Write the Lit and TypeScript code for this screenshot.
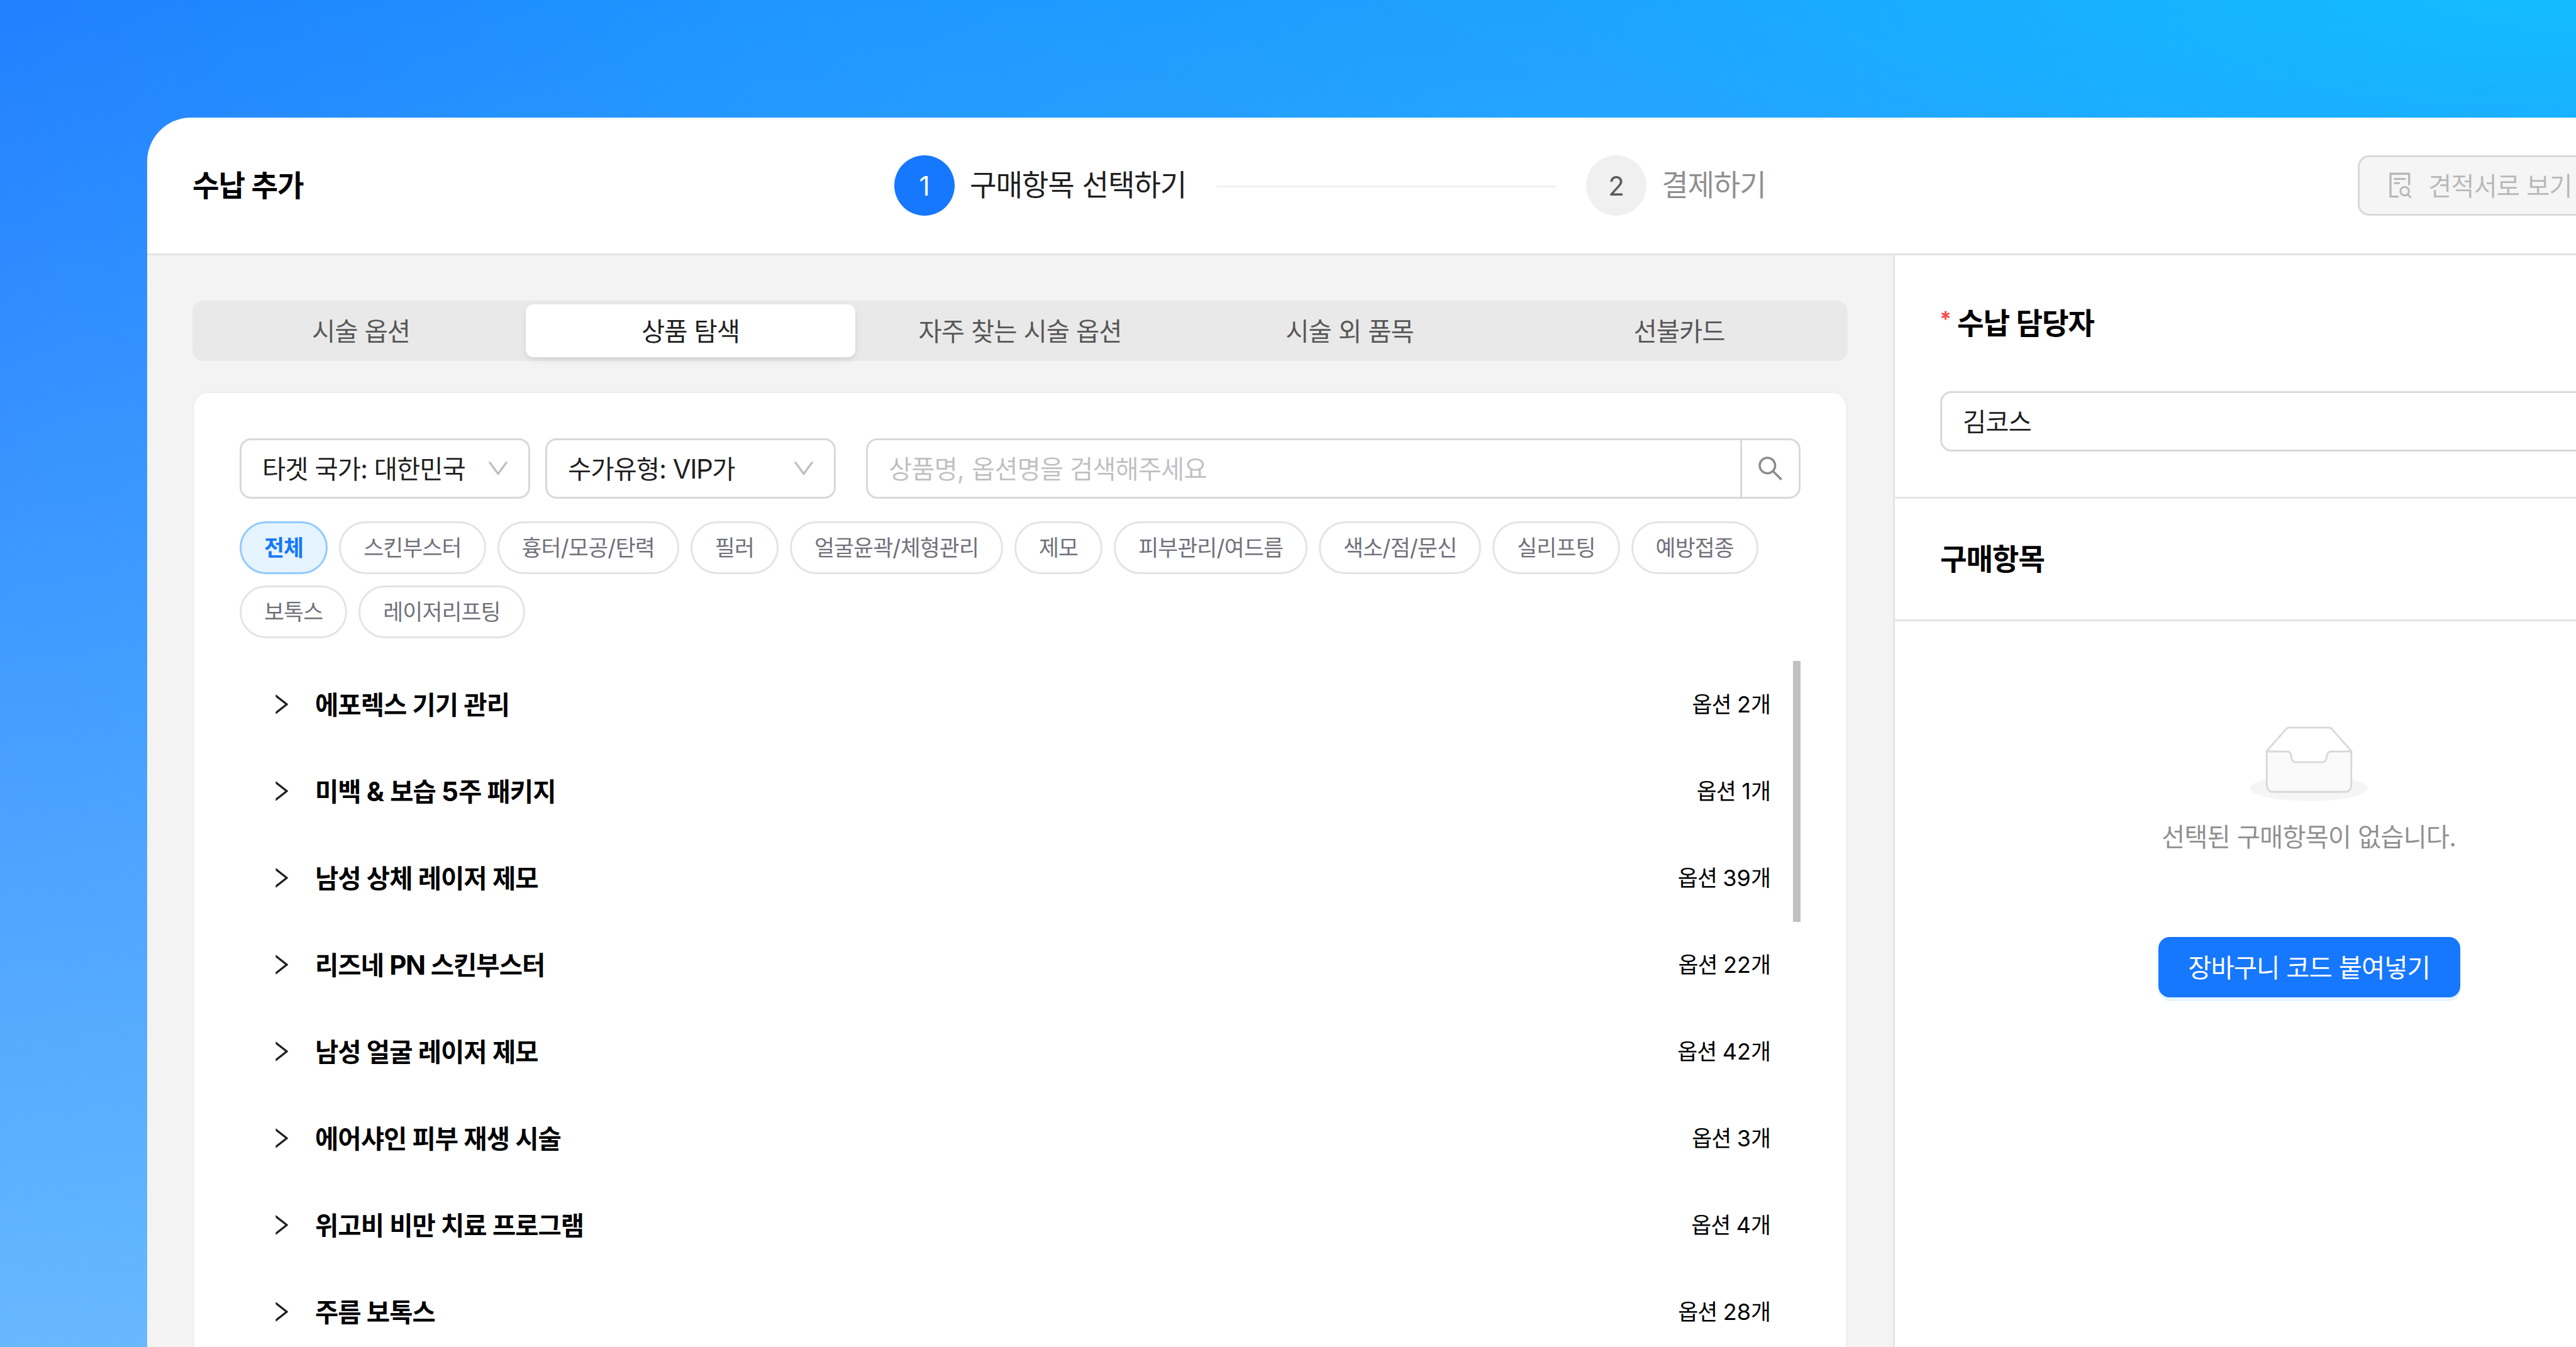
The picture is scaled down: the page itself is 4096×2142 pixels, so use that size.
import { LitElement, html, css, svg } from "lit";
import { customElement, property } from "lit/decorators.js";
import { classMap } from "lit/directives/class-map.js";

const RUNS = /([\uAC00-\uD7A3]+|[A-Z:]+)/;
const HANGUL = /^[\uAC00-\uD7A3]/;
const CAPS = /^[A-Z:]/;

/** Hangul and capital runs get their own metrics; digits and spaces stay in the base face. */
const t = (text: string) =>
  text.split(RUNS).map((part) =>
    HANGUL.test(part)
      ? html`<span class="ko">${part}</span>`
      : CAPS.test(part)
        ? html`<span class="caps">${part}</span>`
        : part
  );

const ICONS: Record<string, string> = {
  down: "M884 256h-75c-5.1 0-9.9 2.5-12.9 6.6L512 654.2 227.9 262.6c-3-4.1-7.8-6.6-12.9-6.6h-75c-6.5 0-10.3 7.4-6.5 12.7l352.6 486.1c12.8 17.6 39 17.6 51.7 0l352.6-486.1c3.9-5.3.1-12.7-6.4-12.7z",
  right: "M765.7 486.8L314.9 134.7A7.97 7.97 0 00302 141v77.3c0 4.9 2.3 9.6 6.1 12.6l360 281.1-360 281.1c-3.9 3-6.1 7.7-6.1 12.6V883c0 6.7 7.7 10.4 12.9 6.3l450.8-352.1a31.96 31.96 0 000-50.4z",
  search: "M909.6 854.5L649.9 594.8C690.2 542.7 712 479 712 412c0-80.2-31.3-155.4-87.9-212.1-56.6-56.7-132-87.9-212.1-87.9s-155.5 31.3-212.1 87.9C143.2 256.5 112 331.8 112 412c0 80.1 31.3 155.5 87.9 212.1C256.5 680.8 331.8 712 412 712c67 0 130.6-21.8 182.7-62l259.7 259.6a8.2 8.2 0 0011.6 0l43.6-43.5a8.2 8.2 0 000-11.6zM570.4 570.4C528 612.7 471.8 636 412 636s-116-23.3-158.4-65.6C211.3 528 188 471.8 188 412s23.3-116.1 65.6-158.4C296 211.3 352.2 188 412 188s116.1 23.2 158.4 65.6S636 352.2 636 412s-23.3 116.1-65.6 158.4z",
  fileSearch: "M688 312v-48c0-4.4-3.6-8-8-8H296c-4.4 0-8 3.6-8 8v48c0 4.4 3.6 8 8 8h384c4.4 0 8-3.6 8-8zm-392 88c-4.4 0-8 3.6-8 8v48c0 4.4 3.6 8 8 8h184c4.4 0 8-3.6 8-8v-48c0-4.4-3.6-8-8-8H296zm144 452H208V148h560v344c0 4.4 3.6 8 8 8h56c4.4 0 8-3.6 8-8V108c0-17.7-14.3-32-32-32H168c-17.7 0-32 14.3-32 32v784c0 17.7 14.3 32 32 32h272c4.4 0 8-3.6 8-8v-56c0-4.4-3.6-8-8-8zm445.7 51.5l-93.3-93.3C814.7 780.7 828 743.9 828 704c0-97.2-78.8-176-176-176s-176 78.8-176 176 78.8 176 176 176c35.8 0 69-10.7 96.8-29l94.7 94.7c1.6 1.6 3.6 2.3 5.6 2.3s4.1-.8 5.6-2.3l31-31a7.9 7.9 0 000-11.2zM652 816c-61.9 0-112-50.1-112-112s50.1-112 112-112 112 50.1 112 112-50.1 112-112 112z",
};

const icon = (name: string, cls: string) =>
  html`<svg class=${cls} viewBox="0 0 1024 1024" fill="currentColor">${svg`<path d=${ICONS[name]}></path>`}</svg>`;

const text = css`
  * { box-sizing: border-box; }
  .ko {
    font-family: "Noto Sans CJK KR", sans-serif;
    font-size: 0.965em;
    letter-spacing: -0.0254em;
    line-height: 0;
  }
  .caps { letter-spacing: -0.035em; }
`;

@customElement("step-bar")
class StepBar extends LitElement {
  static styles = [text, css`
    :host { display: flex; align-items: center; }
    .dot { width: 96px; height: 96px; border-radius: 50%; display: flex; align-items: center; justify-content: center; font-size: 42px; margin-right: 24px; background: #f0f0f0; color: rgba(0,0,0,.65); }
    .dot.on { background: #1677ff; color: #fff; }
    .label { font-size: 48px; line-height: 94px; height: 96px; white-space: nowrap; color: rgba(0,0,0,.45); }
    .label.on { width: 344px; color: rgba(0,0,0,.88); }
    .line { width: 540px; height: 3px; background: #f0f0f0; margin: 3px 48px 0; }
  `];
  render() {
    return html`
      <div class="dot on">1</div><div class="label on">${t("구매항목 선택하기")}</div>
      <div class="line"></div>
      <div class="dot">2</div><div class="label">${t("결제하기")}</div>`;
  }
}

@customElement("tab-bar")
class TabBar extends LitElement {
  static styles = [text, css`
    :host { display: flex; height: 96px; padding: 6px; border-radius: 18px; background: #e9e9e9; }
    .tab { flex: 1; display: flex; align-items: center; justify-content: center; font-size: 42px; white-space: pre; color: rgba(0,0,0,.65); border-radius: 12px; }
    .tab.on { background: #fff; color: rgba(0,0,0,.88); box-shadow: 0 3px 6px 0 rgba(0,0,0,.03), 0 3px 18px -3px rgba(0,0,0,.05), 0 6px 12px 0 rgba(0,0,0,.04); }
  `];
  tabs = ["시술 옵션", "상품 탐색", "자주 찾는 시술 옵션", "시술 외 품목", "선불카드"];
  render() {
    return this.tabs.map((name, i) => html`<div class=${classMap({ tab: true, on: i === 1 })}><span>${t(name)}</span></div>`);
  }
}

@customElement("filter-select")
class FilterSelect extends LitElement {
  @property() label = "";
  static styles = [text, css`
    :host { display: flex; align-items: center; justify-content: space-between; width: 462px; height: 96px; border: 3px solid #d9d9d9; border-radius: 18px; padding: 0 27px 0 33px; font-size: 42px; background: #fff; color: rgba(0,0,0,.88); }
    .label { white-space: nowrap; }
    .chevron { width: 42px; height: 42px; color: rgba(0,0,0,.25); }
  `];
  render() {
    return html`<span class="label">${t(this.label)}</span>${icon("down", "chevron")}`;
  }
}

@customElement("product-list")
class ProductList extends LitElement {
  static styles = [text, css`
    :host { display: block; position: relative; margin-top: 36px; padding-right: 12px; }
    .row { display: flex; align-items: center; height: 138px; padding: 0 36px 0 45px; color: #000; }
    .arrow { width: 42px; height: 42px; margin-right: 33px; color: rgba(0,0,0,.88); }
    .name { flex: 1; font-size: 42px; font-weight: 700; }
    .name .ko { letter-spacing: -0.0235em; }
    .count { font-size: 36px; }
    .thumb { position: absolute; right: 0; top: 0; width: 12px; height: 415px; background: #c1c1c1; }
  `];
  rows: [string, number][] = [
    ["에포렉스 기기 관리", 2],
    ["미백 & 보습 5주 패키지", 1],
    ["남성 상체 레이저 제모", 39],
    ["리즈네 PN 스킨부스터", 22],
    ["남성 얼굴 레이저 제모", 42],
    ["에어샤인 피부 재생 시술", 3],
    ["위고비 비만 치료 프로그램", 4],
    ["주름 보톡스", 28],
  ];
  render() {
    return html`${this.rows.map(([name, n]) => html`
      <div class="row">
        ${icon("right", "arrow")}
        <span class="name">${t(name)}</span>
        <span class="count">${t(`옵션 ${n}개`)}</span>
      </div>`)}
      <div class="thumb"></div>`;
  }
}

@customElement("cart-panel")
class CartPanel extends LitElement {
  static styles = [text, css`
    :host { display: block; width: 1317px; flex: none; background: #fff; }
    .owner { height: 387px; padding: 72px; border-bottom: 3px solid #e4e4e4; }
    .heading { display: flex; align-items: center; font-size: 48px; font-weight: 700; height: 70px; color: #000; }
    .star { width: 15px; height: 15px; margin: -23px 11px 0 1px; color: #ff4d4f; }
    .field { height: 96px; margin-top: 74px; border: 3px solid #d9d9d9; border-radius: 18px; padding: 0 33px; display: flex; align-items: center; font-size: 42px; color: rgba(0,0,0,.88); }
    .items { height: 195px; padding: 60px 72px; border-bottom: 3px solid #e4e4e4; }
    .empty { display: flex; flex-direction: column; align-items: center; padding-top: 166px; }
    .box { width: 187px; height: 120px; }
    .msg { margin-top: 24px; height: 66px; line-height: 66px; font-size: 42px; color: rgba(0,0,0,.45); }
    .paste { margin-top: 126px; width: 480px; height: 96px; border-radius: 18px; background: #1677ff; color: #fff; font-size: 42px; display: flex; align-items: center; justify-content: center; box-shadow: 0 6px 0 rgba(5,145,255,.1); }
  `];
  render() {
    return html`
      <div class="owner">
        <div class="heading">
          <svg class="star" viewBox="0 0 15 15" stroke="currentColor" stroke-width="3.1"><path d="M7.5 0.5v14M1.4 4l12.2 7M1.4 11l12.2-7"></path></svg>
          <span>${t("수납 담당자")}</span>
        </div>
        <div class="field"><span>${t("김코스")}</span></div>
      </div>
      <div class="items"><div class="heading"><span>${t("구매항목")}</span></div></div>
      <div class="empty">
        <svg class="box" viewBox="0 0 64 41">
          <g transform="translate(0 1)" fill="none" fill-rule="evenodd">
            <ellipse fill="#f5f5f5" cx="32" cy="33" rx="32" ry="7"></ellipse>
            <g fill-rule="nonzero" stroke="#d9d9d9">
              <path d="M55 12.76L44.854 1.258C44.367.474 43.656 0 42.907 0H21.093c-.749 0-1.46.474-1.947 1.257L9 12.761V22h46v-9.24z"></path>
              <path d="M41.613 15.931c0-1.605.994-2.93 2.227-2.931H55v18.137C55 33.26 53.68 35 52.05 35h-40.1C10.32 35 9 33.259 9 31.137V13h11.16c1.233 0 2.227 1.323 2.227 2.928v.022c0 1.605 1.005 2.901 2.237 2.901h14.752c1.232 0 2.237-1.308 2.237-2.913v-.007z" fill="#fafafa"></path>
            </g>
          </g>
        </svg>
        <div class="msg">${t("선택된 구매항목이 없습니다.")}</div>
        <div class="paste"><span>${t("장바구니 코드 붙여넣기")}</span></div>
      </div>`;
  }
}

@customElement("app-root")
class AppRoot extends LitElement {
  static styles = [text, css`
    :host {
      display: block; width: 4096px; height: 2142px; overflow: hidden;
      padding: 187px 0 0 234px; box-sizing: border-box;
      font-family: Inter, "Noto Sans CJK KR", sans-serif; word-spacing: -0.047em;
      background:
        radial-gradient(1640px 340px at 100% 0, #14bcff, rgba(20,188,255,0)),
        linear-gradient(180deg, rgba(103,184,255,0), #67b8ff),
        linear-gradient(90deg, #2080ff 0%, #1e96ff 30%, #1ea2ff 60%, #16a6ff 100%);
    }
    .window { width: 4096px; height: 1955px; border-top-left-radius: 70px; overflow: hidden; background: #fff; }
    .header { display: flex; align-items: center; height: 219px; padding-left: 72px; border-bottom: 3px solid #e4e4e4; }
    .title { width: 1116px; font-size: 48px; font-weight: 700; color: #000; padding-bottom: 2px; }
    .steps { width: 2327px; }
    .quote { display: flex; align-items: center; flex: none; width: 480px; height: 96px; border: 3px solid #d9d9d9; border-radius: 18px; background: #f5f5f5; color: rgba(0,0,0,.25); font-size: 42px; padding-left: 41px; white-space: nowrap; }
    .doc { width: 48px; height: 48px; margin-right: 20px; }
    .body { display: flex; height: 1736px; }
    .browse { width: 2779px; flex: none; padding: 72px; padding-bottom: 0; background: #f3f3f3; border-right: 3px solid #e4e4e6; overflow: hidden; }
    .card { margin-top: 48px; height: 1600px; border: 3px solid #f0f0f0; border-radius: 24px; background: #fff; padding: 72px; }
    .filters { display: flex; }
    .second { margin: 0 48px 0 24px; }
    .search { flex: 1; display: flex; height: 96px; border: 3px solid #d9d9d9; border-radius: 18px; font-size: 42px; color: rgba(0,0,0,.25); }
    .hint { flex: 1; display: flex; align-items: center; padding-left: 33px; white-space: pre; }
    .go { width: 93px; border-left: 3px solid #d9d9d9; display: flex; align-items: center; justify-content: center; color: rgba(0,0,0,.45); }
    .glass { width: 48px; height: 48px; }
    .chips { display: flex; flex-wrap: wrap; gap: 18px; margin-top: 36px; }
    .chip { height: 84px; padding: 0 36px; border: 3px solid #e4e4e7; border-radius: 42px; display: flex; align-items: center; font-size: 36px; letter-spacing: -0.016em; color: #71717a; }
    .chip.on { border-color: #91caff; background: #e6f4ff; color: #1677ff; font-weight: 700; }
  `];
  chips = ["전체", "스킨부스터", "흉터/모공/탄력", "필러", "얼굴윤곽/체형관리", "제모", "피부관리/여드름", "색소/점/문신", "실리프팅", "예방접종", "보톡스", "레이저리프팅"];
  render() {
    return html`
      <div class="window">
        <div class="header">
          <div class="title">${t("수납 추가")}</div>
          <step-bar class="steps"></step-bar>
          <div class="quote">${icon("fileSearch", "doc")}<span>${t("견적서로 보기")}</span></div>
        </div>
        <div class="body">
          <div class="browse">
            <tab-bar></tab-bar>
            <div class="card">
              <div class="filters">
                <filter-select label="타겟 국가: 대한민국"></filter-select>
                <filter-select class="second" label="수가유형: VIP가"></filter-select>
                <div class="search">
                  <div class="hint"><span>${t("상품명, 옵션명을 검색해주세요")}</span></div>
                  <div class="go">${icon("search", "glass")}</div>
                </div>
              </div>
              <div class="chips">
                ${this.chips.map((c, i) => html`<div class=${classMap({ chip: true, on: i === 0 })}><span>${t(c)}</span></div>`)}
              </div>
              <product-list></product-list>
            </div>
          </div>
          <cart-panel></cart-panel>
        </div>
      </div>`;
  }
}
